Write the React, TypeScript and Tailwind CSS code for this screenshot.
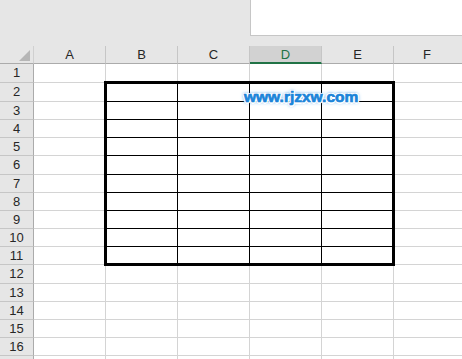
const cols = ['A', 'B', 'C', 'D', 'E']
// row heights incl. bottom gridline, measured from the shot
const rowH = [19, 19, 18, 18, 18, 19, 18, 18, 18, 18, 18, 19, 18, 18, 18, 18]

function inBox(r: number, ci: number) {
  return r >= 2 && r <= 11 && ci >= 1 && ci <= 4
}

export default function App() {
  return (
    <div className="relative h-screen w-full overflow-hidden bg-white font-['Liberation_Sans',Arial,sans-serif] text-[13px] text-[#262626]">
      {/* ribbon strip */}
      <div className="flex h-[46px] bg-[#e6e6e6]">
        <div className="w-[250px] shrink-0" />
        <div className="h-[36px] flex-1 border-b border-l border-[#c6c6c6] bg-white" />
      </div>

      {/* column headers */}
      <div className="flex h-[18px] bg-[#e6e6e6]">
        <div className="relative w-[34px] shrink-0 border-r border-b border-r-[#d0d0d0] border-b-[#ababab]">
          <svg width="11" height="11" className="absolute right-[3px] bottom-[2px]">
            <polygon points="11,0 11,11 0,11" fill="#b6b6b6" />
          </svg>
        </div>
        {cols.map((c) =>
          c === 'D' ? (
            <div key={c} className="flex w-[72px] shrink-0 items-center justify-center border-r border-r-[#c6c6c6] border-b-2 border-b-[#217346] bg-[#d2d2d2] pt-px text-[#217346]">
              {c}
            </div>
          ) : (
            <div key={c} className="flex w-[72px] shrink-0 items-center justify-center border-r border-b border-r-[#c6c6c6] border-b-[#ababab]">
              {c}
            </div>
          ),
        )}
        <div className="flex flex-1 items-center justify-center border-b border-b-[#ababab] pr-[2px]">F</div>
      </div>

      {/* rows */}
      {rowH.map((h, i) => {
        const r = i + 1
        return (
          <div key={r} className="flex" style={{ height: h }}>
            <div className="flex w-[34px] shrink-0 items-center justify-center border-r border-b border-r-[#ababab] border-b-[#c6c6c6] bg-[#e6e6e6]">
              {r}
            </div>
            {cols.map((c, ci) => (
              <div
                key={c}
                className={
                  inBox(r, ci)
                    ? 'w-[72px] shrink-0 border-r border-b border-black'
                    : 'w-[72px] shrink-0 border-r border-b border-[#d4d4d4]'
                }
              />
            ))}
            <div className="flex-1 border-b border-[#d4d4d4]" />
          </div>
        )
      })}
      {/* next row, cut by the window edge */}
      <div className="flex h-[18px]">
        <div className="w-[34px] shrink-0 border-r border-r-[#ababab] bg-[#e6e6e6]" />
        {cols.map((c) => (
          <div key={c} className="w-[72px] shrink-0 border-r border-[#d4d4d4]" />
        ))}
      </div>

      {/* thick outline round B2:E11 */}
      <div className="pointer-events-none absolute top-[81px] left-[104px] h-[185px] w-[291px] border-[3px] border-black" />

      {/* watermark */}
      <div className="absolute top-[89px] left-[244px] text-[15.5px] leading-none font-bold text-[#1b84d9] [-webkit-text-stroke:0.7px_#1b84d9] [text-shadow:1.5px_0_0_#fff,-1.5px_0_0_#fff,0_1.5px_0_#fff,0_-1.5px_0_#fff,1.2px_1.2px_0_#fff,-1.2px_-1.2px_0_#fff,1.2px_-1.2px_0_#fff,-1.2px_1.2px_0_#fff,0_0_3px_#2f8fe0,0_0_4px_#2f8fe0]">
        www.rjzxw.com
      </div>
    </div>
  )
}
